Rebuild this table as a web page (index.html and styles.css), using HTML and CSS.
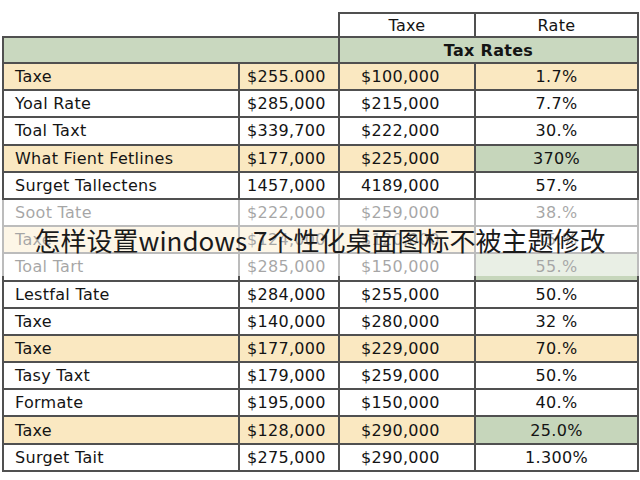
FILE: index.html
```html
<!DOCTYPE html>
<html lang="zh">
<head>
<meta charset="utf-8">
<title>Tax Rates</title>
<link rel="stylesheet" href="styles.css">
</head>
<body>
<div class="stage">
  <table class="rates">
    <colgroup>
      <col class="c1"><col class="c2"><col class="c3"><col class="c4">
    </colgroup>
    <thead>
      <tr class="head">
        <th class="blank"></th><th class="blank"></th>
        <th>Taxe</th><th>Rate</th>
      </tr>
      <tr class="band-title">
        <th colspan="2"></th>
        <th colspan="2" class="title">Tax Rates</th>
      </tr>
    </thead>
    <tbody>
      <tr class="yl"><td>Taxe</td><td>$255.000</td><td>$100,000</td><td class="pct">1.7%</td></tr>
      <tr><td>Yoal Rate</td><td>$285,000</td><td>$215,000</td><td class="pct">7.7%</td></tr>
      <tr><td>Toal Taxt</td><td>$339,700</td><td>$222,000</td><td class="pct">30.%</td></tr>
      <tr class="yl"><td>What Fient Fetlines</td><td>$177,000</td><td>$225,000</td><td class="pct gr">370%</td></tr>
      <tr><td>Surget Tallectens</td><td>1457,000</td><td>4189,000</td><td class="pct">57.%</td></tr>
      <tr><td>Soot Tate</td><td>$222,000</td><td>$259,000</td><td class="pct">38.%</td></tr>
      <tr class="yl"><td>Taxe</td><td>$124,000</td><td>$120,000</td><td class="pct wh">45.%</td></tr>
      <tr><td>Toal Tart</td><td>$285,000</td><td>$150,000</td><td class="pct gr">55.%</td></tr>
      <tr><td>Lestfal Tate</td><td>$284,000</td><td>$255,000</td><td class="pct">50.%</td></tr>
      <tr><td>Taxe</td><td>$140,000</td><td>$280,000</td><td class="pct">32 %</td></tr>
      <tr class="yl"><td>Taxe</td><td>$177,000</td><td>$229,000</td><td class="pct">70.%</td></tr>
      <tr><td>Tasy Taxt</td><td>$179,000</td><td>$259,000</td><td class="pct">50.%</td></tr>
      <tr><td>Formate</td><td>$195,000</td><td>$150,000</td><td class="pct">40.%</td></tr>
      <tr class="yl"><td>Taxe</td><td>$128,000</td><td>$290,000</td><td class="pct gr">25.0%</td></tr>
      <tr><td>Surget Tait</td><td>$275,000</td><td>$290,000</td><td class="pct">1.300%</td></tr>
    </tbody>
  </table>
  <div class="caption-band">
    <p class="caption">怎样设置windows 7个性化桌面图标不被主题修改</p>
  </div>
</div>
</body>
</html>
```
FILE: styles.css
```css
html, body {
  margin: 0;
  padding: 0;
  background: #ffffff;
}

.stage {
  position: relative;
  width: 640px;
  height: 480px;
  overflow: hidden;
  padding-top: 12px;
  box-sizing: border-box;
}

.rates {
  margin-left: 2px;
  width: 635px;
  border-collapse: collapse;
  table-layout: fixed;
  font-family: "DejaVu Sans", sans-serif;
  font-size: 16px;
  letter-spacing: 0.3px;
  color: #141414;
}

.c1 { width: 236px; }
.c2 { width: 100px; }
.c3 { width: 136px; }
.c4 { width: 163px; }

.rates th,
.rates td {
  border: 2px solid #505050;
  padding: 0;
  white-space: nowrap;
  overflow: hidden;
}

.head th {
  height: 22px;
  font-weight: normal;
  background: #ffffff;
}

.head th.blank {
  border: none;
}

.band-title th {
  height: 24px;
  background: #c9d8bf;
}

.band-title .title {
  font-weight: 600;
}

.rates td {
  height: 25.2px;
  background: #ffffff;
}

.rates td:nth-child(1) { padding-left: 11px; }
.rates td:nth-child(2) { padding-left: 7px; }
.rates td:nth-child(3) { padding-left: 21px; }

.rates td.pct {
  text-align: center;
}

.rates tr.yl td {
  background: #fae8c1;
}

.rates tr td.gr {
  background: #c6d6bb;
}

.rates tr td.wh {
  background: #ffffff;
}

.caption-band {
  position: absolute;
  left: 0;
  right: 0;
  top: 200px;
  height: 76px;
  background: rgba(255, 255, 255, 0.62);
  display: flex;
  align-items: center;
  justify-content: center;
}

.caption {
  margin: 4px 0 0 0;
  font-family: "Noto Sans CJK SC", "Noto Sans", sans-serif;
  font-size: 26px;
  line-height: 30px;
  color: #1a1a1a;
  white-space: nowrap;
}
```
